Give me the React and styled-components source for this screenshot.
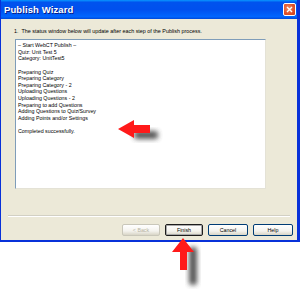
import styled, { createGlobalStyle } from 'styled-components';

const GlobalStyle = createGlobalStyle`
  html, body {
    margin: 0;
    padding: 0;
    background: #ffffff;
  }
  body {
    font-family: Tahoma, "Liberation Sans", Arial, sans-serif;
  }
`;

const Stage = styled.div`
  position: relative;
  width: 300px;
  height: 289px;
  overflow: hidden;
  background: #ffffff;
`;

const Window = styled.div`
  width: 300px;
  height: 242px;
  box-sizing: border-box;
  background: #ece9d8;
  border-left: 1px solid #0831d9;
  border-right: 3px solid #0831d9;
  border-bottom: 2px solid #0831d9;
  display: flex;
  flex-direction: column;
`;

const TitleBar = styled.div`
  height: 19px;
  flex-shrink: 0;
  background: linear-gradient(180deg, #0997ff 0%, #0053ee 12%, #0050ee 50%, #0066ff 88%, #0048d8 100%);
  display: flex;
  align-items: center;
  justify-content: space-between;
  padding: 0 1px 0 3px;
`;

const TitleText = styled.span`
  color: #ffffff;
  font-family: "Liberation Sans", Arial, sans-serif;
  font-weight: bold;
  font-size: 9.5px;
  text-shadow: 1px 1px 0 #0a1e86;
  letter-spacing: 0.1px;
`;

const CloseButton = styled.div`
  width: 11px;
  height: 11px;
  border: 1px solid #ffffff;
  border-radius: 2px;
  background: radial-gradient(circle at 40% 40%, #f08a64 0%, #e0502a 60%, #c3401c 100%);
  display: flex;
  align-items: center;
  justify-content: center;
`;

const Body = styled.div`
  flex: 1;
  display: flex;
  flex-direction: column;
  padding: 9px 0 0 0;
`;

const Instruction = styled.div`
  font-family: "Liberation Sans", Arial, sans-serif;
  font-size: 5.4px;
  color: #000000;
  padding-left: 13px;
  line-height: 7px;
  white-space: nowrap;
`;

const StatusBox = styled.div`
  margin: 4px 0 0 14px;
  width: 251px;
  height: 150px;
  box-sizing: border-box;
  background: #ffffff;
  border-top: 1px solid #7f9db9;
  border-left: 1px solid #7f9db9;
  border-right: 1px solid #e4e2d6;
  border-bottom: 1px solid #e4e2d6;
  padding: 2px 0 0 2px;
  font-family: "Liberation Sans", Arial, sans-serif;
  font-size: 5.3px;
  line-height: 6.65px;
  color: #000000;
`;

const Line = styled.div`
  height: 6.65px;
  white-space: nowrap;
`;

const Separator = styled.div`
  margin: 26px 7px 0 7px;
  height: 0;
  border-top: 1px solid #d2d0c4;
  border-bottom: 1px solid #ffffff;
`;

const ButtonRow = styled.div`
  display: flex;
  justify-content: flex-end;
  gap: 5px;
  padding: 7px 4px 0 0;
`;

const Button = styled.div`
  width: ${p => (p.$wide ? 40 : 38)}px;
  height: 12px;
  box-sizing: border-box;
  border: 1px solid ${p => (p.$default ? '#1c1c1c' : p.$disabled ? '#c9c7ba' : '#003c74')};
  border-radius: 2px;
  background: linear-gradient(180deg, #ffffff 0%, #f4f3ee 60%, #d8d5c6 100%);
  box-shadow: ${p => (p.$default ? 'inset 0 0 0 1px #a9a9a9' : 'none')};
  display: flex;
  align-items: center;
  justify-content: center;
  font-family: "Liberation Sans", Arial, sans-serif;
  font-size: 5.3px;
  color: ${p => (p.$disabled ? '#b8b4a2' : '#000000')};
`;

const Arrow = styled.svg`
  position: absolute;
  left: ${p => p.$x}px;
  top: ${p => p.$y}px;
  overflow: visible;
`;

const statusLines = [
  '– Start WebCT Publish –',
  'Quiz: Unit Test 5',
  'Category: UnitTest5',
  '',
  'Preparing Quiz',
  'Preparing Category',
  'Preparing Category - 2',
  'Uploading Questions',
  'Uploading Questions - 2',
  'Preparing to add Questions',
  'Adding Questions to Quiz/Survey',
  'Adding Points and/or Settings',
  '',
  'Completed successfully.',
];

const LeftArrow = () => (
  <Arrow $x={112} $y={114} width="60" height="40" viewBox="0 0 60 40">
    <defs>
      <filter id="blurL" x="-50%" y="-50%" width="200%" height="200%">
        <feGaussianBlur stdDeviation="2.4" />
      </filter>
    </defs>
    <rect x="22" y="17" width="24" height="8" rx="3" fill="#444" opacity="0.9" filter="url(#blurL)" />
    <polygon points="6,15 22,6 22,11 38,11 38,19 22,19 22,24" fill="#ff1a1a" />
  </Arrow>
);

const UpArrow = () => (
  <Arrow $x={168} $y={233} width="40" height="60" viewBox="0 0 40 60">
    <defs>
      <filter id="blurU" x="-50%" y="-50%" width="200%" height="200%">
        <feGaussianBlur stdDeviation="2.4" />
      </filter>
    </defs>
    <rect x="21" y="14" width="8" height="38" rx="3" fill="#444" opacity="0.9" filter="url(#blurU)" />
    <polygon points="15,5 26,19 19,19 19,37 12,37 12,19 4,19" fill="#ff1a1a" />
  </Arrow>
);

const App = () => (
  <>
    <GlobalStyle />
    <Stage>
      <Window>
        <TitleBar>
          <TitleText>Publish Wizard</TitleText>
          <CloseButton>
            <svg width="7" height="7" viewBox="0 0 7 7">
              <path d="M1 1 L6 6 M6 1 L1 6" stroke="#ffffff" strokeWidth="1.4" />
            </svg>
          </CloseButton>
        </TitleBar>
        <Body>
          <Instruction>1.&nbsp;&nbsp;The status window below will update after each step of the Publish process.</Instruction>
          <StatusBox>
            {statusLines.map((line, i) => (
              <Line key={i}>{line}</Line>
            ))}
          </StatusBox>
          <Separator />
          <ButtonRow>
            <Button $disabled>&lt; Back</Button>
            <Button $default>Finish</Button>
            <Button $wide>Cancel</Button>
            <Button $wide>Help</Button>
          </ButtonRow>
        </Body>
      </Window>
      <LeftArrow />
      <UpArrow />
    </Stage>
  </>
);

export default App;
